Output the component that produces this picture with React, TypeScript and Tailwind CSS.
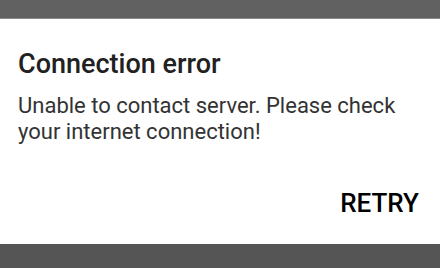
export default function App() {
  return (
    <div className="w-[440px] h-[268px] flex flex-col bg-[#5a5a5a] font-['Roboto',sans-serif] overflow-hidden">
      <div className="h-[19px] bg-[#616161] border-b border-[#8a8a8a]" />
      <div className="h-[225px] bg-white flex flex-col pl-[18px] pr-[21px]">
        <div className="mt-[29px] text-[27px] leading-[32px] font-medium text-[#212121]">Connection error</div>
        <div className="mt-[13px] text-[22px] leading-[26px] text-[#333333]">
          Unable to contact server. Please check your internet connection!
        </div>
        <div className="mt-auto mb-[26px] flex justify-end">
          <button className="text-[26px] leading-[30px] font-medium text-black">RETRY</button>
        </div>
      </div>
      <div className="flex-1 bg-[#555555]" />
    </div>
  );
}
